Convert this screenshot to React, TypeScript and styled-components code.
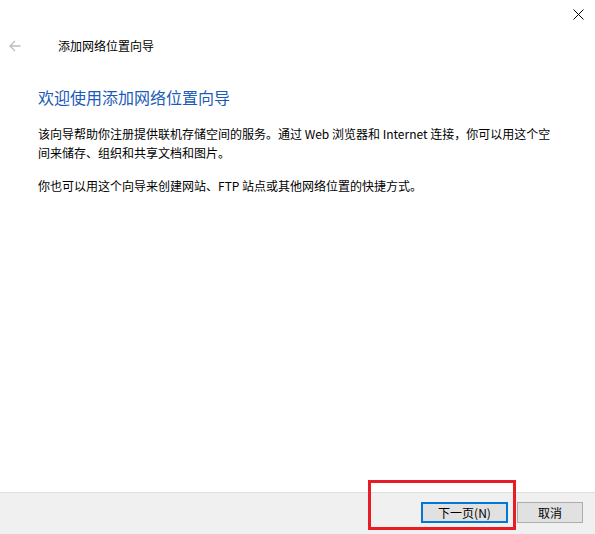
import React from "react";
import styled, { createGlobalStyle } from "styled-components";

const GlobalStyle = createGlobalStyle`
  html, body { margin: 0; padding: 0; background: #ffffff; }
  body { font-family: "Microsoft YaHei", "Noto Sans CJK SC", "Noto Sans", sans-serif; }
  * { box-sizing: border-box; }
`;

const Window = styled.div`
  position: relative;
  width: 595px;
  height: 534px;
  display: flex;
  flex-direction: column;
  background: #ffffff;
  color: #000;
  overflow: hidden;
`;

const TitleBar = styled.div`
  height: 31px;
  display: flex;
  justify-content: flex-end;
  align-items: flex-start;
  padding: 9px 11px 0 0;
`;

const CloseButton = styled.div`
  width: 11px;
  height: 11px;
  display: flex;
`;

const NavRow = styled.div`
  height: 30px;
  display: flex;
  align-items: center;
  padding-left: 9px;
  gap: 37px;
`;

const BackArrow = styled.div`
  width: 12px;
  height: 12px;
  display: flex;
`;

const NavTitle = styled.span`
  font-size: 12px;
  line-height: 16px;
  color: #000;
`;

const Content = styled.div`
  flex: 1;
  padding: 25px 35px 0 38px;
`;

const Heading = styled.h1`
  margin: 0 0 16px 0;
  font-size: 16px;
  font-weight: normal;
  line-height: 22px;
  color: #1c5bb8;
`;

const Paragraph = styled.p`
  margin: 0 0 14px 0;
  font-size: 12px;
  line-height: 19px;
  color: #000;
`;

const Footer = styled.div`
  height: 42px;
  border-top: 1px solid #dfdfdf;
  background: #f0f0f0;
  display: flex;
  justify-content: flex-end;
  align-items: flex-start;
  padding: 9px 12px 0 0;
  gap: 9px;
`;

const Button = styled.div<{ $primary?: boolean; $width: number }>`
  width: ${(p) => p.$width}px;
  height: 21px;
  background: #e1e1e1;
  border: ${(p) => (p.$primary ? "2px solid #0078d7" : "1px solid #adadad")};
  display: flex;
  align-items: center;
  justify-content: center;
  font-size: 12px;
  color: #000;
`;

const Highlight = styled.div`
  position: absolute;
  left: 368px;
  top: 480px;
  width: 148px;
  height: 50px;
  border: 3px solid #e81c24;
  pointer-events: none;
`;

export default function App() {
  return (
    <>
      <GlobalStyle />
      <Window>
        <TitleBar>
          <CloseButton>
            <svg width="11" height="11" viewBox="0 0 11 11">
              <path d="M0.5 0.5 L10.5 10.5 M10.5 0.5 L0.5 10.5" stroke="#000" strokeWidth="1" />
            </svg>
          </CloseButton>
        </TitleBar>
        <NavRow>
          <BackArrow>
            <svg width="12" height="12" viewBox="0 0 12 12">
              <path d="M11.5 6 H1 M6 1 L1 6 L6 11" stroke="#bdbdbd" strokeWidth="1.3" fill="none" />
            </svg>
          </BackArrow>
          <NavTitle>添加网络位置向导</NavTitle>
        </NavRow>
        <Content>
          <Heading>欢迎使用添加网络位置向导</Heading>
          <Paragraph>
            该向导帮助你注册提供联机存储空间的服务。通过 Web 浏览器和 Internet 连接，你可以用这个空间来储存、组织和共享文档和图片。
          </Paragraph>
          <Paragraph>你也可以用这个向导来创建网站、FTP 站点或其他网络位置的快捷方式。</Paragraph>
        </Content>
        <Footer>
          <Button $primary $width={87}>下一页(N)</Button>
          <Button $width={66}>取消</Button>
        </Footer>
        <Highlight />
      </Window>
    </>
  );
}
